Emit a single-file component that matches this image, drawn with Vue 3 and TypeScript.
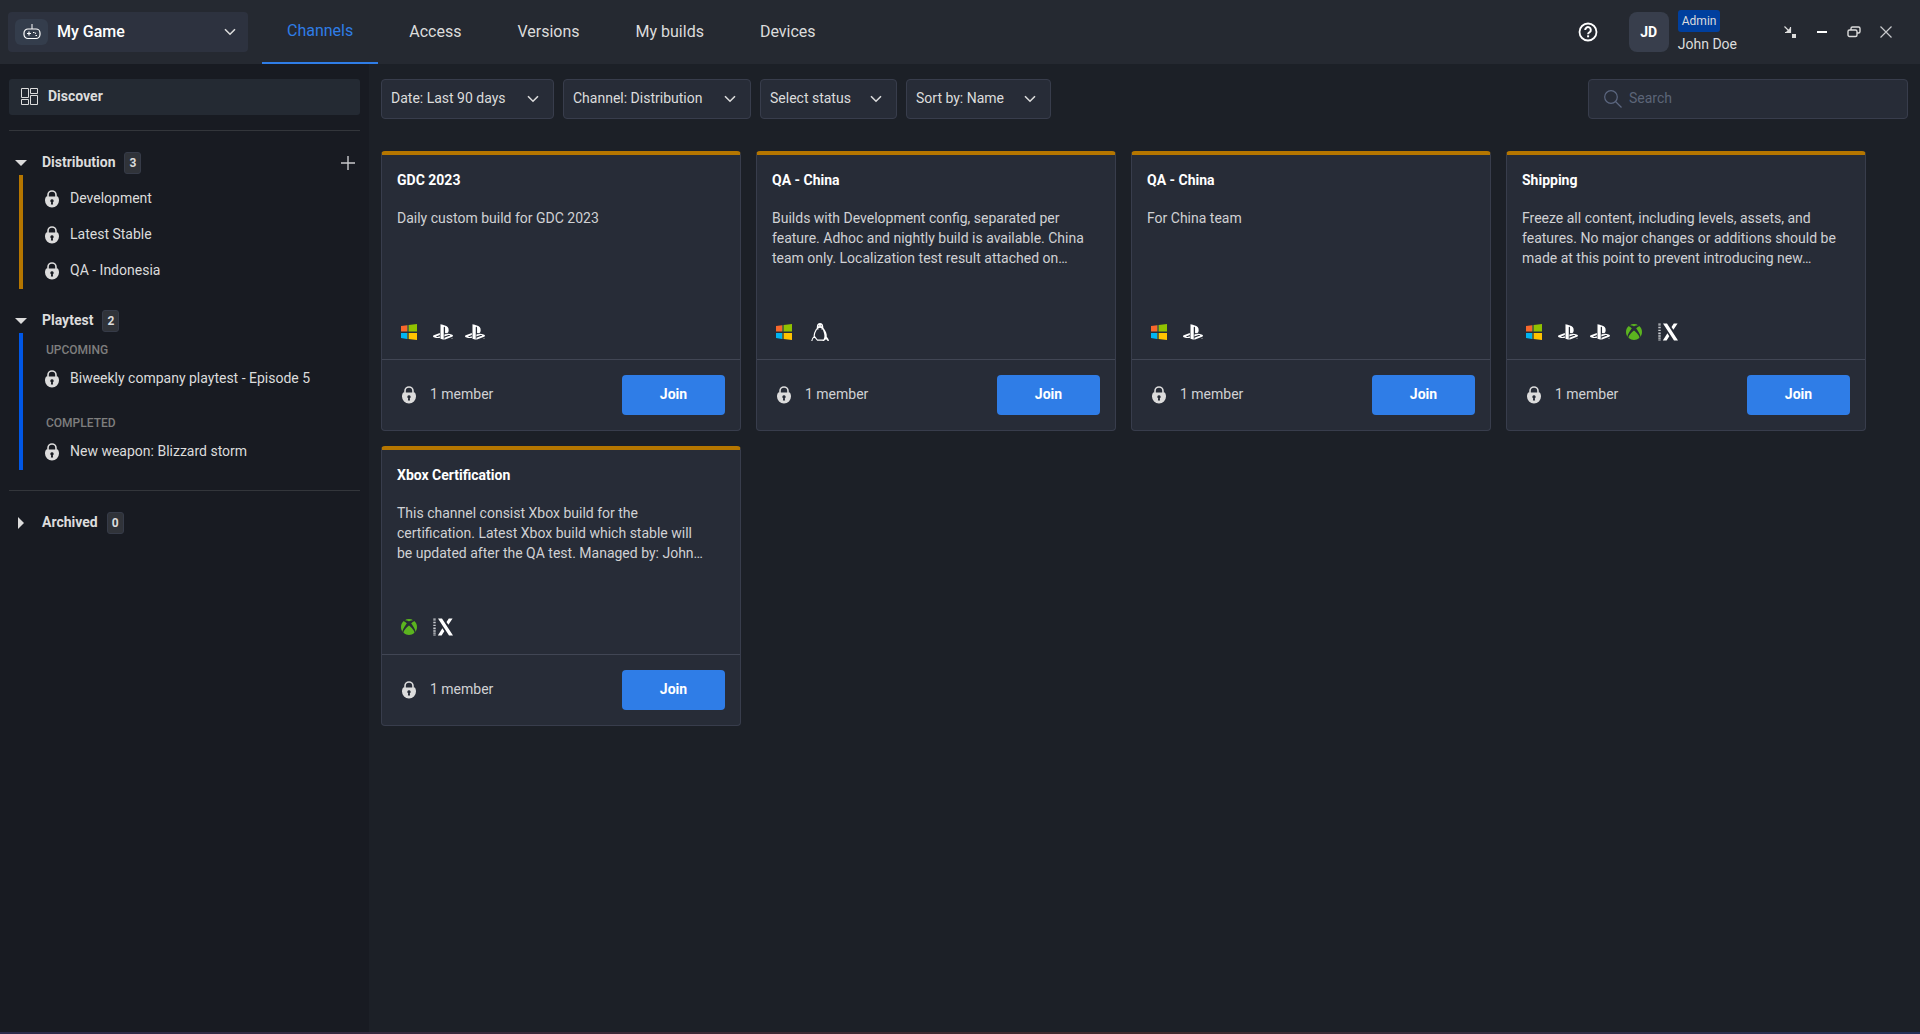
<script setup lang="ts">
type Platform = 'windows' | 'playstation' | 'linux' | 'xbox' | 'seriesx'

interface Channel {
  title: string
  description: string
  platforms: Platform[]
}

interface Filter {
  id: string
  label: string
  value: string
}

const tabs: string[] = ['Channels', 'Access', 'Versions', 'My builds', 'Devices']

const filters: Filter[] = [
  { id: 'date', label: 'Date range', value: 'Date: Last 90 days' },
  { id: 'channel', label: 'Channel type', value: 'Channel: Distribution' },
  { id: 'status', label: 'Status', value: 'Select status' },
  { id: 'sort', label: 'Sort order', value: 'Sort by: Name' },
]

const distribution: string[] = ['Development', 'Latest Stable', 'QA - Indonesia']

const playtests = [
  { heading: 'UPCOMING', name: 'Biweekly company playtest - Episode 5' },
  { heading: 'COMPLETED', name: 'New weapon: Blizzard storm' },
]

const channels: Channel[] = [
  {
    title: 'GDC 2023',
    description: 'Daily custom build for GDC 2023',
    platforms: ['windows', 'playstation', 'playstation'],
  },
  {
    title: 'QA - China',
    description:
      'Builds with Development config, separated per\nfeature. Adhoc and nightly build is available. China\nteam only. Localization test result attached on…',
    platforms: ['windows', 'linux'],
  },
  {
    title: 'QA - China',
    description: 'For China team',
    platforms: ['windows', 'playstation'],
  },
  {
    title: 'Shipping',
    description:
      'Freeze all content, including levels, assets, and\nfeatures. No major changes or additions should be\nmade at this point to prevent introducing new…',
    platforms: ['windows', 'playstation', 'playstation', 'xbox', 'seriesx'],
  },
  {
    title: 'Xbox Certification',
    description:
      'This channel consist Xbox build for the\ncertification. Latest Xbox build which stable will\nbe updated after the QA test. Managed by: John…',
    platforms: ['xbox', 'seriesx'],
  },
]
</script>

<template>
  <svg class="sprite" aria-hidden="true">
    <symbol id="i-lock" viewBox="0 0 14 18">
      <path d="M3 8V5a4 4 0 0 1 8 0v3" fill="none" stroke="currentColor" stroke-width="1.6" />
      <path
        fill="currentColor"
        fill-rule="evenodd"
        d="M1.2 6.6h11.6c.7 1 1.2 2.4 1.2 4A7 7 0 0 1 0 10.6c0-1.6.5-3 1.2-4zM7 9.2a1.7 1.7 0 0 0-.8 3.2l-.3 2.2h2.200l-.3-2.200A1.700 1.700 0 0 0 7 9.200z"
      />
    </symbol>
    <symbol id="i-chevron" viewBox="0 0 12 8">
      <path d="M1 1.200l5 5 5-5" fill="none" stroke="currentColor" stroke-width="1.600" />
    </symbol>
    <symbol id="i-windows" viewBox="0 0 16 16">
      <path fill="#f8682c" d="M0 2l6-.8v6.300H0z" />
      <path fill="#91c300" d="M7.600.9L16 0v7.500H7.600z" />
      <path fill="#00b4f1" d="M0 9h6v6l-6-.9z" />
      <path fill="#ffc300" d="M7.600 9H16v7l-8.400-.9z" />
      <path fill="#5d6a3a" d="M6 1.200l1.600-.3v6.600H6zM6 9h1.600v6.100H6z" />
    </symbol>
    <symbol id="i-playstation" viewBox="0 2.500 24 19">
      <path
        fill="#fff"
        d="M8.985 2.596v17.548l3.915 1.261V6.688c0-.69.304-1.151.794-.991.636.181.76.814.76 1.505v5.876c2.441 1.193 4.362-.002 4.362-3.153 0-3.237-1.126-4.675-4.438-5.827-1.307-.448-3.728-1.186-5.391-1.502zm4.656 16.242l6.296-2.275c.715-.258.826-.625.246-.818-.586-.192-1.637-.139-2.357.123l-4.205 1.499v-2.385l.24-.085s1.201-.42 2.913-.615c1.696-.18 3.785.029 5.437.661 1.848.601 2.041 1.472 1.576 2.072s-1.622 1.036-1.622 1.036l-8.544 3.107v-2.297zM1.808 18.600c-1.900-.545-2.214-1.668-1.352-2.321.801-.585 2.159-1.051 2.159-1.051l5.616-2.013v2.313L4.205 17c-.705.271-.825.632-.239.826.586.195 1.637.15 2.343-.12L8.247 17v2.074c-.12.03-.256.044-.39.073-1.939.331-3.996.196-6.038-.479z"
      />
      <circle cx="22.800" cy="19.600" r=".7" fill="#aaa" />
    </symbol>
    <symbol id="i-linux" viewBox="0 0 18 18">
      <path fill="#fff" d="M9 0c2 0 3.200 1.400 3.200 3.300 0 1.300.2 2.200.8 3.200H5.200c.5-1 .7-2 .7-3.200C5.900 1.400 7.100 0 9 0z" />
      <path fill="#272c37" d="M9 4.800l1.800.8c-.2 1.200-.9 2-1.800 2s-1.700-.8-1.900-2z" />
      <path fill="none" stroke="#fff" stroke-width="1.200" d="M5.600 6C4.400 8 3 10.200 3.200 13.200M6 17.200h6.400M.8 18c.1-1.900 1-3.200 2.600-4.600L6.200 17" />
      <path fill="#fff" d="M11.500 5.500h1.300c1.900 2.600 3.400 5.200 3 8.500 1.100 1 1.900 2.300 2.200 4h-1.300c-.5-1-1-1.500-1.700-1.800L12.800 18h-1.500c1.500-1.500 2.300-3.500 2.100-5.500-.1-2.600-1.200-4.700-1.900-7z" />
      <circle cx="7.800" cy="2.800" r=".5" fill="#272c37" />
      <circle cx="10.200" cy="2.800" r=".5" fill="#272c37" />
    </symbol>
    <symbol id="i-xbox" viewBox="0 0 24 24">
      <path
        fill="#5bb41f"
        d="M4.102 21.033C6.211 22.881 8.977 24 12 24c3.026 0 5.789-1.119 7.902-2.967 1.877-1.912-4.316-8.709-7.902-11.417-3.582 2.708-9.779 9.505-7.898 11.417zm11.160-14.406c2.500 2.961 7.484 10.313 6.076 12.912C23.002 17.480 24 14.861 24 12.004c0-3.340-1.365-6.362-3.570-8.536 0 0-.027-.022-.082-.042-.063-.022-.152-.045-.281-.045-.592 0-1.985.434-4.805 3.246zM3.654 3.426c-.057.020-.082.041-.086.042C1.365 5.642 0 8.664 0 12.004c0 2.854.998 5.473 2.661 7.533-1.401-2.605 3.579-9.951 6.080-12.910-2.820-2.813-4.216-3.245-4.806-3.245-.131 0-.223.021-.281.046zM12 3.551S9.055 1.828 6.755 1.746c-.903-.033-1.454.295-1.521.339C7.379.646 9.659 0 11.984 0H12c2.334 0 4.605.646 6.766 2.085-.068-.046-.615-.372-1.520-.339C14.946 1.828 12 3.545 12 3.545z"
      />
    </symbol>
    <symbol id="i-seriesx" viewBox="0 0 20 18">
      <path d="M1.500.5v17" stroke="#c9cbd0" stroke-width="2.400" stroke-dasharray="1.200 .8 .6 .6" fill="none" />
      <path
        fill="#fff"
        d="M5 .5h4L20 17.500h-4zM15.800.5H19.600L15.400 6.800l-1.900-2.900zM9.400 10.300l1.900 3-2.700 4.200H4.800z"
      />
    </symbol>
  </svg>

  <div class="app">
    <header class="topbar">
      <button type="button" class="game">
        <span class="game-icon">
          <svg width="18" height="16" viewBox="0 0 18 16" fill="none" stroke="currentColor">
            <path d="M9 0v5" stroke-width="1" />
            <rect x="1" y="5" width="16" height="9.500" rx="4" stroke-width="1.200" />
            <path d="M4 9.500h4M6 7.500v4M10 8.500h1.500M12.500 11.500H14M12 9l1 .5" stroke-width="1.200" />
          </svg>
        </span>
        <span class="game-name">My Game</span>
        <svg class="chevron" width="12" height="8"><use href="#i-chevron" /></svg>
      </button>

      <nav class="tabs">
        <a v-for="(tab, i) in tabs" :key="tab" href="#" class="tab" :class="{ active: i === 0 }">{{ tab }}</a>
      </nav>

      <button type="button" class="icon-button help" aria-label="Help">
        <svg width="20" height="20" viewBox="0 0 20 20" fill="none" stroke="#fff">
          <circle cx="10" cy="10" r="8.500" stroke-width="1.800" />
          <path d="M7.200 8a2.800 2.800 0 1 1 4.400 2.200c-1 .7-1.500 1-1.500 2" stroke-width="2" />
          <path d="M10.100 13.300v2" stroke-width="2" />
        </svg>
      </button>

      <div class="user">
        <span class="avatar">JD</span>
        <div class="user-text">
          <span class="role">Admin</span>
          <span class="user-name">John Doe</span>
        </div>
      </div>

      <div class="window-controls">
        <button type="button" class="icon-button" aria-label="Compact">
          <svg width="14" height="14" viewBox="0 0 14 14" fill="none" stroke="#dcdcdc">
            <path d="M1.500 1.500l4.500 4.500M7.500 2v5.500H2" stroke-width="1.200" />
            <path d="M9 9h4v4H9z" fill="#dcdcdc" stroke="none" />
            <path d="M7 3v4H3z" fill="#dcdcdc" stroke="none" />
          </svg>
        </button>
        <button type="button" class="icon-button" aria-label="Minimize">
          <svg width="14" height="14" viewBox="0 0 14 14"><path d="M2 6h10v2H2z" fill="#fff" /></svg>
        </button>
        <button type="button" class="icon-button" aria-label="Restore">
          <svg width="14" height="14" viewBox="0 0 14 14" fill="none" stroke="#dcdcdc" stroke-width="1.400">
            <rect x="1" y="5" width="9" height="6.500" rx="1.500" />
            <path d="M4 5V3.500A1.500 1.500 0 0 1 5.500 2h6A1.500 1.500 0 0 1 13 3.500v3A1.500 1.500 0 0 1 11.500 8H10" />
          </svg>
        </button>
        <button type="button" class="icon-button" aria-label="Close">
          <svg width="14" height="14" viewBox="0 0 14 14">
            <path d="M1.500 1.500l11 11M12.500 1.500l-11 11" stroke="#c8c9cc" stroke-width="1.200" />
          </svg>
        </button>
      </div>
    </header>

    <div class="body">
      <aside class="sidebar">
        <a href="#" class="discover">
          <svg width="18" height="18" viewBox="0 0 18 18" fill="none" stroke="currentColor">
            <path d="M.5.5h7v9h-7zM9.500.5h7v5h-7zM.5 11.500h7v5h-7zM9.500 7.500h7v9h-7z" />
          </svg>
          <span class="label">Discover</span>
        </a>
        <hr class="rule" />

        <section class="group">
          <div class="group-head">
            <svg class="caret" width="12" height="6" viewBox="0 0 12 6"><path d="M0 0h12L6 6z" fill="currentColor" /></svg>
            <h2 class="label">Distribution</h2>
            <span class="badge">3</span>
            <button type="button" class="icon-button add" aria-label="Add channel">
              <svg width="14" height="14" viewBox="0 0 14 14">
                <path d="M7 0v14M0 7h14" stroke="#c8c9cc" stroke-width="1.400" />
              </svg>
            </button>
          </div>
          <ul class="items orange">
            <li v-for="name in distribution" :key="name">
              <a href="#" class="item">
                <svg width="14" height="18"><use href="#i-lock" /></svg>
                <span class="label">{{ name }}</span>
              </a>
            </li>
          </ul>
        </section>

        <section class="group">
          <div class="group-head">
            <svg class="caret" width="12" height="6" viewBox="0 0 12 6"><path d="M0 0h12L6 6z" fill="currentColor" /></svg>
            <h2 class="label">Playtest</h2>
            <span class="badge">2</span>
          </div>
          <ul class="items blue">
            <li v-for="test in playtests" :key="test.name" class="playtest">
              <h3>{{ test.heading }}</h3>
              <a href="#" class="item">
                <svg width="14" height="18"><use href="#i-lock" /></svg>
                <span class="label">{{ test.name }}</span>
              </a>
            </li>
          </ul>
        </section>

        <hr class="rule" />
        <section class="group">
          <div class="group-head">
            <svg class="caret" width="12" height="12" viewBox="0 0 12 12"><path d="M3 0l6 6-6 6z" fill="currentColor" /></svg>
            <h2 class="label">Archived</h2>
            <span class="badge">0</span>
          </div>
        </section>
      </aside>

      <main class="main">
        <div class="toolbar">
          <div v-for="filter in filters" :key="filter.id" class="filter" :class="filter.id">
            <select :id="filter.id" :aria-label="filter.label">
              <option>{{ filter.value }}</option>
            </select>
            <svg class="chevron" width="12" height="8"><use href="#i-chevron" /></svg>
          </div>
          <label class="search">
            <svg width="18" height="18" viewBox="0 0 18 18" fill="none" stroke="#5c6780">
              <circle cx="7" cy="7" r="6.300" stroke-width="1.200" />
              <path d="M11.500 11.500l6 6" stroke-width="1.200" />
            </svg>
            <input type="search" placeholder="Search" aria-label="Search" />
          </label>
        </div>

        <div class="grid">
          <article v-for="(channel, i) in channels" :key="i" class="card">
            <div class="card-body">
              <h2>{{ channel.title }}</h2>
              <p>{{ channel.description }}</p>
              <div class="platforms">
                <span v-for="(platform, j) in channel.platforms" :key="j" class="platform" :class="platform">
                  <svg><use :href="`#i-${platform}`" /></svg>
                </span>
              </div>
            </div>
            <div class="card-foot">
              <span class="lock"><svg width="14" height="18"><use href="#i-lock" /></svg></span>
              <span class="members label">1 member</span>
              <button type="button" class="join label">Join</button>
            </div>
          </article>
        </div>
      </main>
    </div>
  </div>
</template>

<style>
body {
  background: #1c2027;
}
</style>

<style scoped>
.sprite {
  position: absolute;
  width: 0;
  height: 0;
}

.app {
  display: flex;
  flex-direction: column;
  box-sizing: border-box;
  min-height: 100vh;
  border-bottom: 2px solid;
  border-image: linear-gradient(90deg, #2c2b4c, #3a2838 30%, #40292c 60%, #25305a) 1;
  background: #1c2027;
  color: #dcdcdc;
  font: 14px/20px Roboto, "Liberation Sans", sans-serif;
}

.app *,
.app *::before {
  box-sizing: border-box;
}

button,
input,
select {
  color: inherit;
  font: inherit;
}

button {
  padding: 0;
  border: 0;
  background: none;
  cursor: pointer;
}

a {
  color: inherit;
  text-decoration: none;
}

svg {
  display: block;
  flex: none;
}

h2,
h3,
p,
ul {
  margin: 0;
  padding: 0;
  list-style: none;
}

.label {
  padding-bottom: 2px;
}

.icon-button {
  display: flex;
  align-items: center;
  justify-content: center;
}

.topbar {
  display: flex;
  align-items: center;
  height: 64px;
  padding: 0 27px 0 8px;
  background: #252931;
}

.game {
  display: flex;
  align-items: center;
  width: 240px;
  height: 40px;
  padding: 0 12px 0 7px;
  border-radius: 4px;
  background: #2d323f;
  color: #fff;
}

.game-icon {
  display: flex;
  align-items: center;
  justify-content: center;
  width: 33px;
  height: 26px;
  border-radius: 6px;
  background: #343d4c;
}

.game-name {
  flex: 1;
  margin-left: 9px;
  font-size: 16px;
  font-weight: 500;
  text-align: left;
}

.chevron {
  color: #dcdcdc;
}

.tabs {
  display: flex;
  gap: 6px;
  align-self: stretch;
  margin-left: 14px;
}

.tab {
  display: flex;
  align-items: center;
  padding: 0 25px;
  font-size: 16px;
}

.tab.active {
  border-bottom: 2px solid #2f7de7;
  color: #2f7de7;
}

.help {
  margin-left: auto;
}

.user {
  display: flex;
  align-items: center;
  gap: 9px;
  margin-left: 31px;
}

.avatar {
  width: 40px;
  border-radius: 8px;
  background: #383e4c;
  color: #fff;
  font-weight: 700;
  line-height: 40px;
  text-align: center;
}

.user-text {
  display: flex;
  flex-direction: column;
  align-items: flex-start;
  gap: 2px;
}

.role {
  padding: 0 4px;
  border-radius: 3px;
  background: #003f9e;
  font-size: 12px;
  line-height: 22px;
}

.window-controls {
  display: flex;
  gap: 18px;
  margin-left: 46px;
}

.body {
  display: flex;
  flex: 1;
}

.sidebar {
  flex: none;
  width: 369px;
  padding: 15px 9px;
  background: #181b22;
}

.discover {
  display: flex;
  align-items: center;
  gap: 9px;
  height: 36px;
  padding: 0 12px;
  border-radius: 3px;
  background: #242a33;
  font-weight: 700;
}

.rule {
  height: 1px;
  margin: 15px 0 20px;
  border: 0;
  background: #33363b;
}

.group {
  margin-bottom: 20px;
}

.group-head {
  display: flex;
  align-items: center;
  height: 24px;
  padding-left: 6px;
}

.group-head h2 {
  margin: 0 9px 0 15px;
  font-size: 14px;
  font-weight: 700;
}

.badge {
  width: 17px;
  border: 1px solid #363b48;
  border-radius: 3px;
  background: #303339;
  font-size: 12px;
  font-weight: 700;
  text-align: center;
}

.add {
  margin: 0 5px 0 auto;
}

.items {
  margin-left: 10px;
  padding: 6px 0 0 22px;
  border-left: 4px solid;
}

.items.orange {
  border-color: #b57600;
}

.items.blue {
  border-color: #0057e6;
}

.item {
  display: flex;
  align-items: center;
  gap: 11px;
  height: 36px;
}

.playtest {
  margin-bottom: 15px;
}

.playtest:last-child {
  margin-bottom: 0;
}

.playtest h3 {
  padding-left: 1px;
  color: #7e7e7e;
  font-size: 12px;
  font-weight: 500;
  line-height: 22px;
}

.main {
  flex: 1;
  min-width: 0;
  padding: 15px 12px;
}

.toolbar {
  display: flex;
  gap: 9px;
  margin-bottom: 32px;
}

.filter {
  position: relative;
}

.filter.date {
  width: 173px;
}

.filter.channel {
  width: 188px;
}

.filter.status {
  width: 137px;
}

.filter.sort {
  width: 145px;
}

.filter select {
  width: 100%;
  height: 40px;
  padding: 0 30px 2px 9px;
  border: 1px solid #383d4c;
  border-radius: 4px;
  background: #272c37;
  appearance: none;
}

.filter .chevron {
  position: absolute;
  top: 16px;
  right: 15px;
  pointer-events: none;
}

.search {
  display: flex;
  align-items: center;
  gap: 7px;
  width: 320px;
  height: 40px;
  margin-left: auto;
  padding: 0 15px;
  border: 1px solid #383d4c;
  border-radius: 4px;
  background: #272c37;
}

.search input {
  flex: 1;
  min-width: 0;
  padding: 0 0 2px;
  border: 0;
  outline: 0;
  background: none;
}

.search input::placeholder {
  color: #5c6577;
}

.grid {
  display: grid;
  grid-template-columns: repeat(auto-fill, 360px);
  gap: 15px;
}

.card {
  display: flex;
  flex-direction: column;
  height: 280px;
  overflow: hidden;
  border: 1px solid #383d4c;
  border-top: 4px solid #b57600;
  border-radius: 4px;
  background: #272c37;
}

.card-body {
  display: flex;
  flex: 1;
  flex-direction: column;
  padding: 15px;
}

.card h2 {
  margin-bottom: 18px;
  color: #fff;
  font-size: 14px;
  font-weight: 700;
}

.card p {
  color: #d0d1d4;
  white-space: pre-line;
}

.platforms {
  display: flex;
  gap: 12px;
  margin-top: auto;
}

.platform {
  display: flex;
  align-items: center;
  justify-content: center;
  width: 24px;
  height: 24px;
}

.platform svg {
  width: 16px;
  height: 16px;
}

.platform.playstation,
.platform.seriesx {
  width: 20px;
}

.platform.playstation svg {
  width: 20px;
}

.platform.seriesx svg {
  width: 20px;
  height: 18px;
}

.platform.linux svg {
  width: 18px;
  height: 18px;
}

.card-foot {
  display: flex;
  align-items: center;
  gap: 9px;
  padding: 15px;
  border-top: 1px solid #414654;
}

.lock {
  display: flex;
  justify-content: center;
  width: 24px;
}

.members {
  color: #d0d1d4;
}

.join {
  width: 103px;
  height: 40px;
  margin-left: auto;
  border-radius: 4px;
  background: #2f7de7;
  color: #fff;
  font-weight: 700;
}
</style>
